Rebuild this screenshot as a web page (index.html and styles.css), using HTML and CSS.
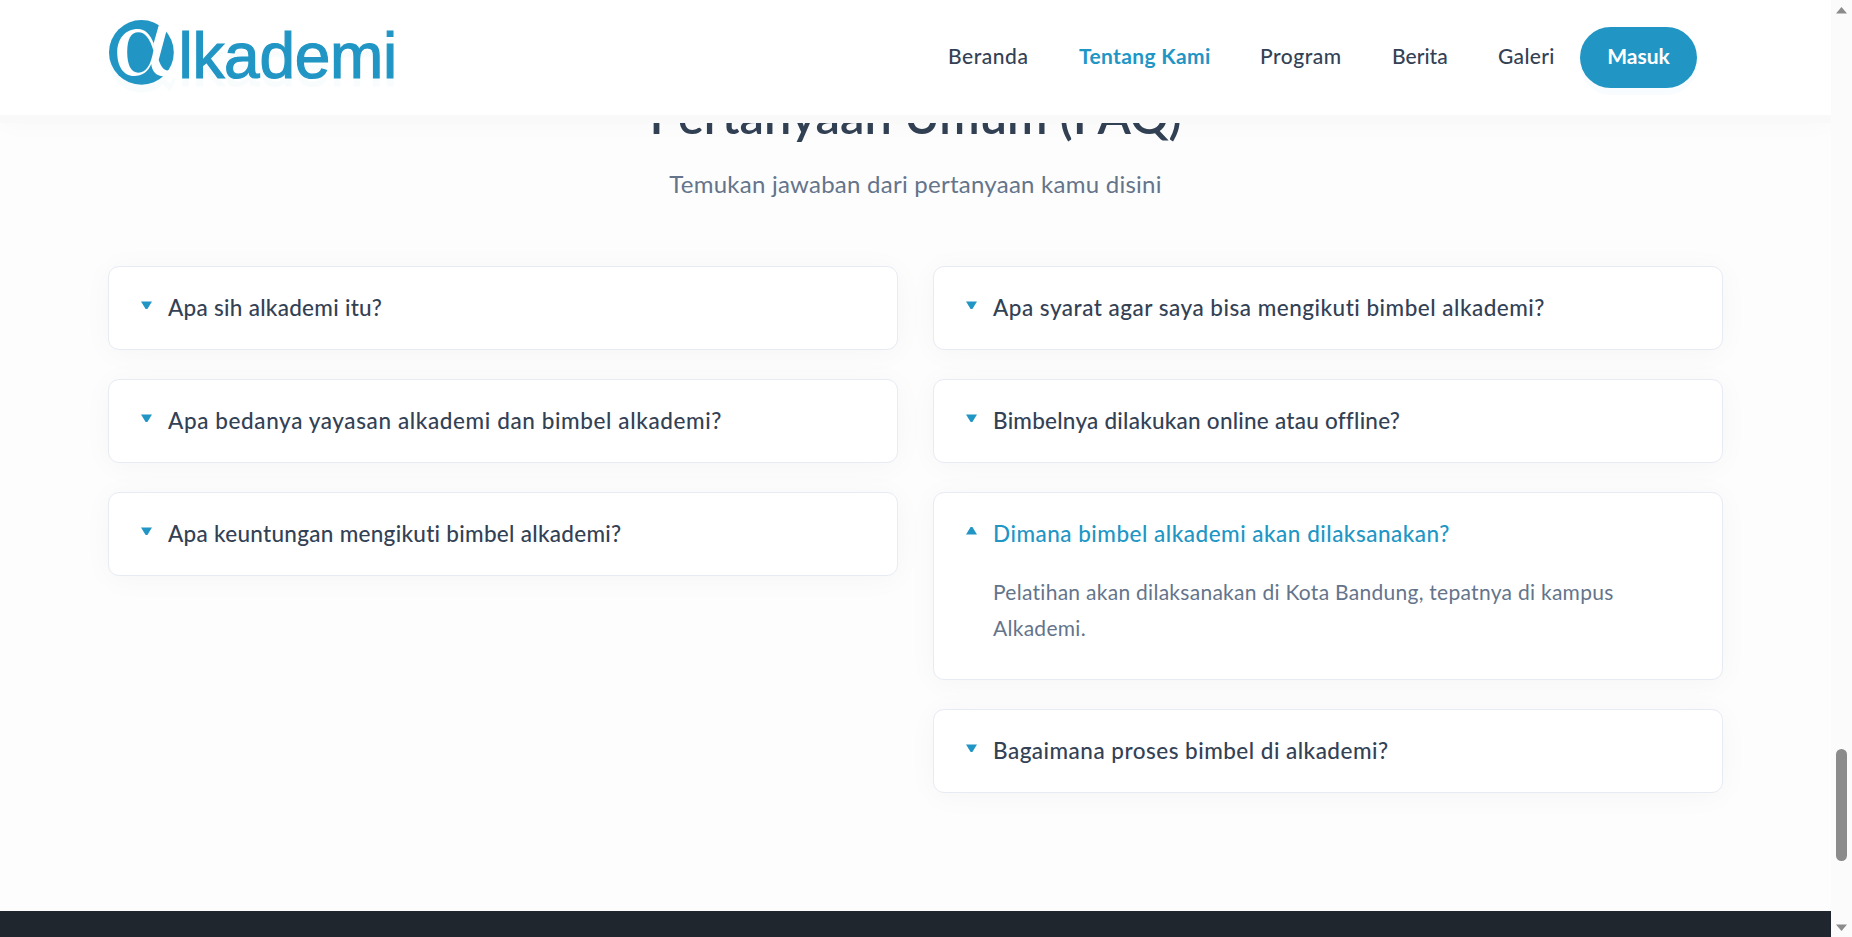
FILE: index.html
```html
<!DOCTYPE html>
<html lang="id">
<head>
<meta charset="utf-8">
<title>Alkademi</title>
<link rel="stylesheet" href="styles.css">
</head>
<body>
<div class="window">
  <div class="page">
    <header class="header">
      <a class="logo">
        <svg class="logo-mark" viewBox="108 19 68 68" width="68" height="68">
          <circle cx="141.4" cy="52.4" r="32.4" fill="#2196c5"/>
          <path d="M153.8 43.5C150 34 145 29 138 29C125 29 117.2 39 117.2 52C117.2 66 123 76 134 76C142 76 148 72 151.3 64Z" fill="#fff"/>
          <path d="M159.4 23L153.6 43.5L150 60L151.3 64.5C152 71 156 76 163.5 76.5L170 84L176 71L170 69.3C167 72 162 70 158.7 60L166.3 31.5L169 23Z" fill="#fff"/>
          <path d="M138.3 32.3C145 32.3 149.5 38 153.4 50.5C151 65 146 72.7 138.3 72.7C131 72.7 127.2 65 127.2 52C127.2 39 131 32.3 138.3 32.3Z" fill="#2196c5"/>
        </svg>
        <span class="logo-text">lkademi</span>
      </a>
      <nav class="nav">
        <a class="w-beranda">Beranda</a>
        <a class="w-tentang active">Tentang Kami</a>
        <a class="w-program">Program</a>
        <a class="w-berita">Berita</a>
        <a class="w-galeri">Galeri</a>
        <a class="button">Masuk</a>
      </nav>
    </header>
    <main class="faq">
      <h2 class="title">Pertanyaan Umum (FAQ)</h2>
      <p class="subtitle">Temukan jawaban dari pertanyaan kamu disini</p>
      <div class="columns">
        <div class="column">
          <div class="card"><h3 class="question"><i class="caret"></i><span class="q1">Apa sih alkademi itu?</span></h3></div>
          <div class="card"><h3 class="question"><i class="caret"></i><span class="q2">Apa bedanya yayasan alkademi dan bimbel alkademi?</span></h3></div>
          <div class="card"><h3 class="question"><i class="caret"></i><span class="q3">Apa keuntungan mengikuti bimbel alkademi?</span></h3></div>
        </div>
        <div class="column">
          <div class="card"><h3 class="question"><i class="caret"></i><span class="q4">Apa syarat agar saya bisa mengikuti bimbel alkademi?</span></h3></div>
          <div class="card"><h3 class="question"><i class="caret"></i><span class="q5">Bimbelnya dilakukan online atau offline?</span></h3></div>
          <div class="card open"><h3 class="question"><i class="caret up"></i><span class="q6">Dimana bimbel alkademi akan dilaksanakan?</span></h3>
            <p class="answer">Pelatihan akan dilaksanakan di Kota Bandung, tepatnya di kampus<br>Alkademi.</p></div>
          <div class="card"><h3 class="question"><i class="caret"></i><span class="q7">Bagaimana proses bimbel di alkademi?</span></h3></div>
        </div>
      </div>
    </main>
    <footer class="footer"></footer>
  </div>
  <aside class="scrollbar">
    <svg width="11" height="7" viewBox="0 0 11 7"><path d="M0 6.5L5.5 0L11 6.5Z" fill="#8b8b8b"/></svg>
    <div class="thumb"></div>
    <svg width="11" height="7" viewBox="0 0 11 7"><path d="M0 .5H11L5.5 7Z" fill="#8b8b8b"/></svg>
  </aside>
</div>
</body>
</html>
```
FILE: styles.css
```css
* { box-sizing: border-box; }
body { margin: 0; font-family: Lato, "Open Sans", sans-serif; color: #334155; background: #fdfdfd; font-variant-ligatures: none; }
.window { display: flex; height: 937px; overflow: hidden; }
.page { width: 1831px; height: 937px; display: flex; flex-direction: column; overflow: hidden; }
.header { position: relative; z-index: 2; height: 115px; flex: none; background: #fff; display: flex; justify-content: space-between; padding: 0 134px 0 108px; box-shadow: 0 8px 0 #f9f9f9, 0 10px 24px rgba(0,0,0,.025); }
.logo { display: flex; height: 115px; filter: drop-shadow(0 8px 0 rgba(33,150,197,.03)); }
.logo-mark { margin-top: 19px; }
.logo-text { font: 64px/74px "Liberation Sans", Arial, sans-serif; letter-spacing: -.3px; color: #2196c5; margin: 19px 0 0 2.5px; -webkit-text-stroke: 1.2px #2196c5; }
.nav { display: flex; align-items: center; font-size: 21px; font-weight: 500; white-space: nowrap; text-shadow: 0 8px 0 rgba(51,65,85,.025); }
.nav a { flex: none; height: 61px; line-height: 58px; }
.w-beranda { width: 131px; letter-spacing: .55px; }
.w-tentang { width: 181px; letter-spacing: .35px; }
.w-program { width: 132px; letter-spacing: .5px; }
.w-berita { width: 106px; letter-spacing: .05px; }
.w-galeri { width: 82px; letter-spacing: .35px; }
.active { color: #2196c5; font-weight: 700; }
.nav .button { width: 117px; border-radius: 31px; background: #2196c5; color: #fff; font-weight: 700; text-align: center; text-shadow: none; box-shadow: 0 7px 0 #f9fcfe; }
.faq { height: 796px; flex: none; padding: 0 108px; }
.title { margin: -30px 0 0; height: 60px; font-size: 48.7px; line-height: 60px; font-weight: 600; text-align: center; white-space: nowrap; }
.subtitle { margin: 21px 0 0; height: 36px; font-size: 24px; line-height: 36px; letter-spacing: .25px; text-align: center; color: #64748b; }
.columns { display: flex; gap: 35px; margin-top: 64px; }
.column { width: 790px; display: flex; flex-direction: column; gap: 29px; }
.card { height: 84px; border: 1px solid #e7ebf3; border-radius: 11px; background: #fff; box-shadow: 0 3px 30px rgba(20,30,50,.035); padding: 0 32px; }
.card.open { height: 188px; }
.question { margin: 0; height: 80px; display: flex; align-items: center; font-size: 22.5px; font-weight: 500; white-space: nowrap; }
.q1 { letter-spacing: .28px; }
.q2 { letter-spacing: .61px; }
.q3 { letter-spacing: .29px; }
.q4 { letter-spacing: .5px; }
.q5 { letter-spacing: .24px; }
.q6 { letter-spacing: .5px; }
.q7 { letter-spacing: .48px; }
.caret { width: 11px; height: 8px; margin: -4px 16px 0 0; background: #2196c5; clip-path: polygon(0 5%, 100% 5%, 58% 100%, 42% 100%); flex: none; }
.caret.up { clip-path: polygon(42% 0, 58% 0, 100% 95%, 0 95%); }
.open .question { color: #2196c5; }
.answer { margin: 1px 0 0 27px; font-size: 21px; line-height: 36px; letter-spacing: .28px; color: #64748b; white-space: nowrap; }
.footer { height: 26px; flex: none; background: #20262d; }
.scrollbar { width: 21px; background: #fbfbfb; display: flex; flex-direction: column; align-items: center; padding: 7px 0 6px; }
.thumb { width: 11px; height: 112px; border-radius: 6px; background: #8b8b8b; margin: 735px 0 auto; }
```
